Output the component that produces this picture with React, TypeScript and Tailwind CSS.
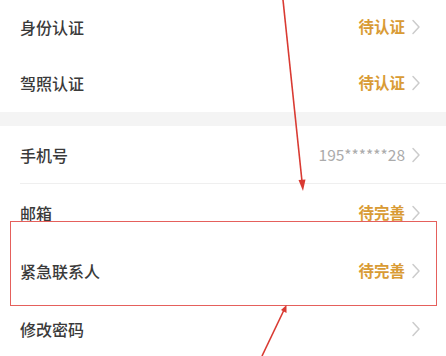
import React from 'react';

type Row = {
  label: string;
  value?: string;
  tone?: 'warn' | 'muted';
  h: string;
  divider?: boolean;
};

const Chevron = () => (
  <svg width="10" height="16" viewBox="0 0 10 16" className="ml-[6px] shrink-0">
    <path d="M2 1.5 L8 8 L2 14.5" fill="none" stroke="#cccccc" strokeWidth="1.5" strokeLinecap="round" strokeLinejoin="round" />
  </svg>
);

const ListRow = ({ row }: { row: Row }) => (
  <div className={`relative flex items-center justify-between pl-5 pr-[25px] ${row.h}`}>
    <span className="text-[16px] font-medium text-[#3a3a3a]">{row.label}</span>
    <div className="flex items-center">
      {row.value && (
        <span
          className={
            row.tone === 'warn'
              ? 'text-[15.5px] font-semibold text-[#d99b35]'
              : 'text-[15.5px] text-[#ababab]'
          }
        >
          {row.value}
        </span>
      )}
      <Chevron />
    </div>
    {row.divider && <div className="absolute bottom-0 left-5 right-0 h-px bg-[#efefef]" />}
  </div>
);

const topGroup: Row[] = [
  { label: '身份认证', value: '待认证', tone: 'warn', h: 'h-[54px]' },
  { label: '驾照认证', value: '待认证', tone: 'warn', h: 'h-[58px]' },
];

const bottomGroup: Row[] = [
  { label: '手机号', value: '195******28', tone: 'muted', h: 'h-[58px]', divider: true },
  { label: '邮箱', value: '待完善', tone: 'warn', h: 'h-[58px]' },
  { label: '紧急联系人', value: '待完善', tone: 'warn', h: 'h-[58px]' },
  { label: '修改密码', h: 'h-[58px]' },
];

export default function App() {
  return (
    <div
      className="relative h-[356px] w-[446px] overflow-hidden bg-white"
      style={{ fontFamily: '"Noto Sans CJK SC", "Noto Sans", sans-serif' }}
    >
      <div className="flex flex-col">
        {topGroup.map((r) => (
          <ListRow key={r.label} row={r} />
        ))}
        <div className="h-[14px] bg-[#f4f4f4]" />
        {bottomGroup.map((r) => (
          <ListRow key={r.label} row={r} />
        ))}
      </div>

      {/* annotation box */}
      <div className="absolute left-[10px] top-[221px] h-[85px] w-[427px] border-[1.5px] border-[#e5605c]" />

      {/* annotation arrows */}
      <svg className="pointer-events-none absolute left-0 top-0" width="446" height="356" viewBox="0 0 446 356">
        <line x1="283" y1="0" x2="302.5" y2="186" stroke="#d93a32" strokeWidth="1.6" />
        <path d="M298.5 180 L303 191 L305.5 179.5 Z" fill="#d93a32" />
        <line x1="262" y1="356" x2="284" y2="310" stroke="#d93a32" strokeWidth="1.6" />
        <path d="M281 310 L286.5 305 L286.5 313 Z" fill="#d93a32" />
      </svg>
    </div>
  );
}
